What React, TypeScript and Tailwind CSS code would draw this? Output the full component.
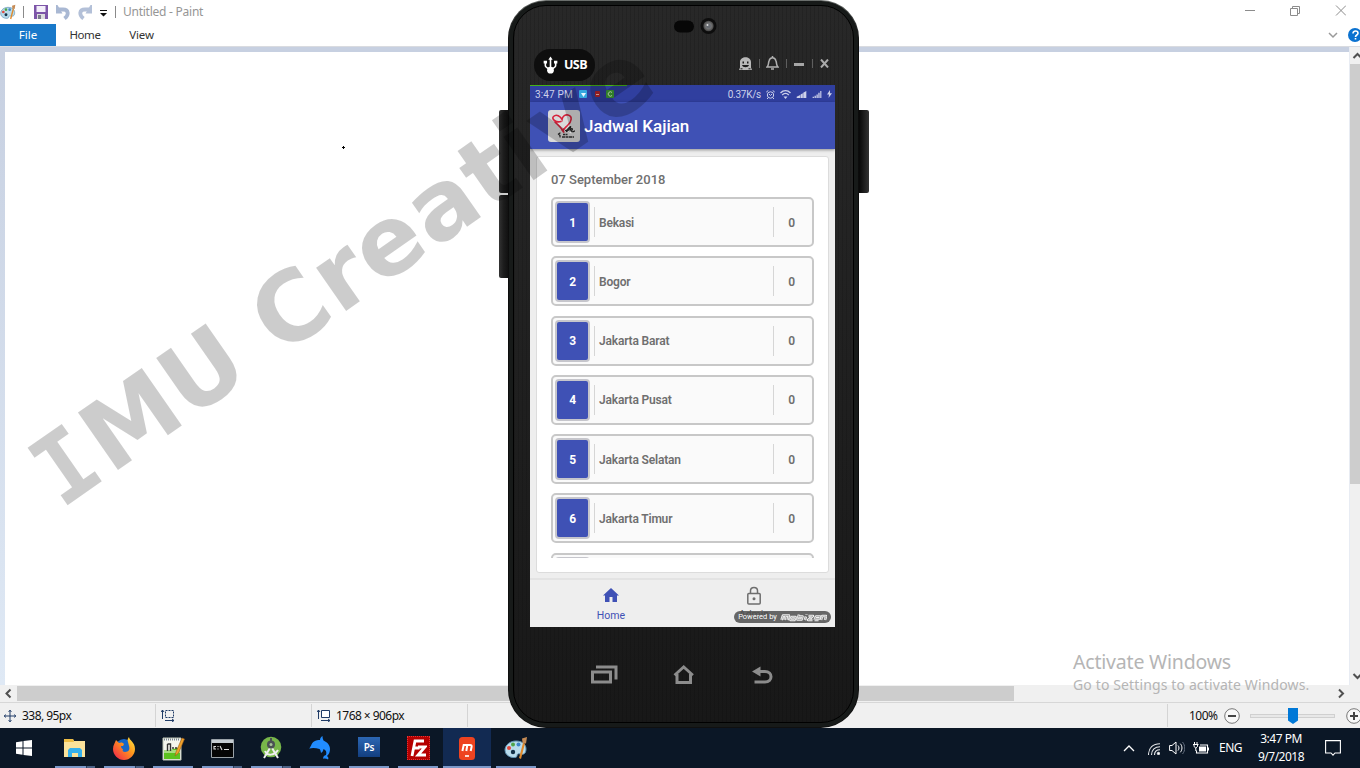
import React from "react";

const cities = ["Bekasi", "Bogor", "Jakarta Barat", "Jakarta Pusat", "Jakarta Selatan", "Jakarta Timur"];

function Palette({ className }: { className: string }) {
  return (
    <svg className={className} viewBox="0 0 24 24">
      <path d="M1 14c0-5 5-9 11-9s10 3 10 8-3 6-6 5c-2-.6-3 0-3 2 0 3-12 2-12-6z" fill="#b9dcec" stroke="#5f93b3" strokeWidth="1" />
      <circle cx="5" cy="12" r="2" fill="#e2483b" />
      <circle cx="9" cy="8.500" r="2" fill="#4fa64a" />
      <circle cx="14.500" cy="8.500" r="2" fill="#3f86c8" />
      <circle cx="9" cy="16" r="2.200" fill="#123047" />
      <path d="M15 22L19 7l2 .6L17 23z" fill="#e08a2c" />
      <path d="M18.600 7L18 2.500 23 1l-1 6.500z" fill="#c58b55" />
    </svg>
  );
}

function TitleBar() {
  return (
    <div className="flex h-6 shrink-0 items-center bg-white">
      <Palette className="h-[18px] w-4 shrink-0" />
      <div className="ml-[7px] h-3 w-px bg-[#8a8a8a]" />
      <svg className="ml-[10px] h-[14px] w-[14px]" viewBox="0 0 14 14">
        <path d="M0 0h14v14H0z" fill="#7d55a8" />
        <path d="M2.500 1h9v6h-9z" fill="#f3eefa" />
        <path d="M3 9h8v5H3z" fill="#ddd" />
        <path d="M4 10h3v4H4z" fill="#7a7a8c" />
      </svg>
      <svg className="ml-2 h-[15px] w-[14px]" viewBox="0 0 14 15">
        <path d="M3 4.500h4c6 0 6 5.500 1.500 9" fill="none" stroke="#a9b8d3" strokeWidth="3.800" />
        <path d="M0 0l1.500 0 5 8.500H0z" fill="#a9b8d3" />
      </svg>
      <svg className="ml-2 h-[15px] w-[14px]" viewBox="0 0 14 15">
        <path d="M11 4.500H7C1 4.500 1 10 5.500 13.500" fill="none" stroke="#b3c0d8" strokeWidth="3.800" />
        <path d="M14 0l-1.500 0-5 8.500H14z" fill="#b3c0d8" />
      </svg>
      <svg className="ml-2 mt-[2px] h-2 w-[7px]" viewBox="0 0 7 8">
        <path d="M0 1h7v1H0zM0 4h7L3.500 7.500z" fill="#111" />
      </svg>
      <div className="ml-[8px] h-3 w-px bg-[#8a8a8a]" />
      <div className="ml-[7px] text-[12px] leading-6 tracking-[-0.25px] text-[#969696]">Untitled - Paint</div>
      <svg className="mb-[3px] ml-auto mr-[14px] h-[11px] w-[102px]" viewBox="0 0 102 11" fill="none" stroke="#8c8c8c">
        <path d="M1 5.500h10" />
        <path d="M46.500 3.500h7v7h-7zM48.500 3.500v-2h7v7h-2" />
        <path d="M92 .5l10 10M102 .5l-10 10" />
      </svg>
    </div>
  );
}

function RibbonTabs() {
  return (
    <div className="flex h-[22px] shrink-0 items-center bg-white text-[11.500px] text-[#333]">
      <div className="flex h-[22px] w-14 items-center justify-center bg-[#1979ca] text-white">File</div>
      <div className="w-[58px] text-center tracking-[-0.4px]">Home</div>
      <div className="w-[55px] text-center tracking-[-0.15px]">View</div>
      <svg className="ml-auto h-[14px] w-[32px]" viewBox="0 0 32 14">
        <path d="M1 5l4 4 4-4" fill="none" stroke="#9a9a9a" strokeWidth="1.500" />
        <circle cx="27" cy="7" r="7" fill="#0b72d0" />
        <path d="M25 5.500c0-3.500 5-3 5-.3 0 1.900-2.500 1.700-2.500 3.700M27.500 10v1.500" fill="none" stroke="#fff" strokeWidth="1.600" />
      </svg>
    </div>
  );
}

function Canvas() {
  return (
    <div className="flex h-[639px] shrink-0 border-t border-[#d9dbe0]">
      <div className="flex w-[1349px] flex-col">
        <div className="h-[5px] bg-[#c7d0e1]" />
        <div className="flex h-[633px]">
          <div className="w-[5px] bg-gradient-to-b from-[#c7d0e1] to-[#dfe9f5]" />
          <div className="flex-1 bg-white pl-[337px] pt-[94px]">
            <svg className="h-[3px] w-[3px]" viewBox="0 0 3 3">
              <path d="M1 0h1v1h1v1H2v1H1V2H0V1h1z" fill="#000" />
            </svg>
          </div>
        </div>
      </div>
      <div className="w-px bg-[#e8ecf3]" />
      <div className="flex w-[10px] flex-col justify-between overflow-hidden bg-[#f0f0f0]">
        <div>
          <svg className="h-[17px] w-[14px]" viewBox="0 0 14 17">
            <path d="M3.500 11L7.500 7l4 4" fill="none" stroke="#505050" strokeWidth="2" />
          </svg>
          <div className="h-[420px] bg-[#cdcdcd]" />
        </div>
        <svg className="h-[17px] w-[14px]" viewBox="0 0 14 17">
          <path d="M3.500 6L7.500 10l4-4" fill="none" stroke="#505050" strokeWidth="2" />
        </svg>
      </div>
    </div>
  );
}

function HScroll() {
  return (
    <div className="flex h-[17px] shrink-0 items-start bg-[#f0f0f0] pt-px">
      <svg className="h-[15px] w-[17px]" viewBox="0 0 17 15">
        <path d="M10.500 3.500L6.500 7.500l4 4" fill="none" stroke="#505050" strokeWidth="2" />
      </svg>
      <div className="h-[15px] w-[997px] bg-[#cdcdcd]" />
      <svg className="ml-auto mr-[11px] h-[15px] w-4" viewBox="0 0 16 15">
        <path d="M6 3.500L10 7.500l-4 4" fill="none" stroke="#505050" strokeWidth="2" />
      </svg>
    </div>
  );
}

function StatusBar() {
  return (
    <div className="flex h-[26px] shrink-0 items-center border-t border-[#d7d7d7] bg-[#f0f0f0] text-[12px] tracking-[-0.55px] text-[#111]">
      <svg className="ml-1 h-3 w-3" viewBox="0 0 12 12" fill="none" stroke="#1f3b66">
        <path d="M0 6h12M6 0v12M4.500 1.500L6 .5l1.500 1M4.500 10.500L6 11.500l1.500-1M1.500 4.500L.5 6l1 1.500M10.500 4.500L11.500 6l-1 1.500" />
      </svg>
      <div className="ml-[6px] w-[133px]">338, 95px</div>
      <div className="h-[23px] w-px bg-[#d4d4d4]" />
      <svg className="ml-[5px] h-[13px] w-[14px]" viewBox="0 0 14 13" fill="none" stroke="#1f3b66">
        <path d="M1.500 10V1M0 3l1.500-2L3 3M4 11.500h9M11 10l2 1.500-2 1.500" />
        <path d="M4.500 1.500h8v7h-8z" strokeDasharray="2 1" />
      </svg>
      <div className="ml-[136px] h-[23px] w-px bg-[#d4d4d4]" />
      <svg className="ml-[5px] h-[13px] w-[14px]" viewBox="0 0 14 13" fill="none" stroke="#1f3b66">
        <path d="M1.500 10V1M0 3l1.500-2L3 3M4 11.500h9M11 10l2 1.500-2 1.500" />
        <path d="M4.500 1.500h8v7h-8z" fill="#fff" />
      </svg>
      <div className="ml-[5px] w-[131px]">1768 × 906px</div>
      <div className="h-[23px] w-px bg-[#d4d4d4]" />
      <div className="ml-auto h-[23px] w-px bg-[#d4d4d4]" />
      <div className="ml-[21px] w-[35px]">100%</div>
      <svg className="h-4 w-4 shrink-0" viewBox="0 0 16 16">
        <circle cx="8" cy="8" r="7.300" fill="#f8f8f8" stroke="#777" />
        <path d="M4 8h8" stroke="#444" strokeWidth="2" />
      </svg>
      <div className="ml-[10px] flex h-4 w-[85px] shrink-0 items-center justify-center">
        <div className="flex h-1 w-full items-center justify-center border border-[#d0d0d0] bg-[#e8e8e8]">
          <svg className="h-4 w-[10px] shrink-0" viewBox="0 0 10 16">
            <path d="M0 0h10v12.500L5 16l-5-3.500z" fill="#0078d7" />
          </svg>
        </div>
      </div>
      <div className="ml-[11px] w-[14px] overflow-hidden">
        <svg className="h-4 w-4" viewBox="0 0 16 16">
          <circle cx="8" cy="8" r="7.300" fill="#f8f8f8" stroke="#777" />
          <path d="M4 8h8M8 4v8" stroke="#444" strokeWidth="2" />
        </svg>
      </div>
    </div>
  );
}

const taskIcons: { icon: React.ReactNode; active?: boolean; multi?: boolean }[] = [
  {
    multi: true,
    icon: (
      <svg className="h-[18px] w-[22px]" viewBox="0 0 22 18">
        <path d="M0 0h9l1 2h11v16H0z" fill="#fbe29a" />
        <path d="M0 0h9l1 3H0z" fill="#eebd45" />
        <path d="M4 18v-7l2-2h10l2 2v7h-4v-4H8v4z" fill="#35b0ec" />
      </svg>
    ),
  },
  {
    multi: true,
    icon: (
      <svg className="h-[23px] w-[23px]" viewBox="0 0 23 23">
        <defs>
          <linearGradient id="fox" x1="1" y1="0" x2="0" y2="1">
            <stop offset="0" stopColor="#fff04a" />
            <stop offset=".4" stopColor="#ff9a1c" />
            <stop offset="1" stopColor="#f0184f" />
          </linearGradient>
        </defs>
        <circle cx="11" cy="11" r="9" fill="#1867c7" />
        <path d="M3 3l3 3c2-1 4-.5 5 1l-1 2H8c0 2 1 3 2 3-1 2 0 3 2 3 4 0 5-3 4-6l-1-4c-1-2 0-4 1-5 0 3 6 5 6 12 0 6-5 11-11 11S0 18 0 12C0 8 2 6 3 3z" fill="url(#fox)" />
      </svg>
    ),
  },
  {
    icon: (
      <svg className="h-[25px] w-[23px]" viewBox="0 0 23 25">
        <path d="M1 2h18v22H1z" fill="#f4f6ee" stroke="#bcc3b4" />
        <path d="M2 16l16-5v12H2z" fill="#5cc21f" />
        <path d="M2 14h16v3H2z" fill="#a8dd80" />
        <path d="M2 3.500h16" stroke="#7b8794" strokeWidth="2" strokeDasharray="1 1" />
        <path d="M5.500 8h3v7M5.500 8v7M10 12h2M13 12h2" stroke="#333" strokeWidth="1.400" fill="none" />
        <path d="M13 20l1-4 6-14 2.500 1-6 14z" fill="#f1a22b" stroke="#9b5b18" strokeWidth=".6" />
      </svg>
    ),
  },
  {
    multi: true,
    icon: (
      <svg className="h-[19px] w-[23px]" viewBox="0 0 23 19">
        <path d="M.5.5h22v18H.5z" fill="#050505" stroke="#9aa2a8" />
        <path d="M1 1h21v3H1z" fill="#c5ccd1" />
        <path d="M3 7.500h2M3 7v3h2M7 7v1M7 9.500v1M9 7l2 4M13 10.500h5" stroke="#ddd" strokeWidth="1.100" fill="none" />
      </svg>
    ),
  },
  {
    multi: true,
    icon: (
      <svg className="h-[24px] w-[22px]" viewBox="0 0 22 24">
        <circle cx="11" cy="11" r="10.300" fill="#78b74a" />
        <path d="M10 12L4 22M12 12l6 10M5 15c2 5 9 5 13-1" fill="none" stroke="#f0f0f0" strokeWidth="2" />
        <circle cx="11" cy="8.500" r="4" fill="#4b5154" />
        <path d="M11 2v4" stroke="#4b5154" strokeWidth="2" />
        <circle cx="11" cy="8.500" r="1.500" fill="#a9c49a" />
      </svg>
    ),
  },
  {
    icon: (
      <svg className="h-6 w-[22px]" viewBox="0 0 22 24">
        <path d="M0 12.500c2-1 2-5 5-7C7 4 9 4 11 4c0-2 1-3 2.500-4 0 1.500.2 3 1 4.500C18 6 21 9 21 13c0 3-1 5-3 7 1 1 2 2 1 3.500-1.500-1-3-1.300-5-.8 0-2 1-3 3-3.700C18 16 17 14 14.500 13c-.3 2-1 3-2.500 4-.3-1.500-.5-3-1.500-4C7 12 4 11.500 0 12.500z" fill="#218cff" />
      </svg>
    ),
  },
  {
    icon: (
      <div className="-mt-[2px] flex h-[20px] w-[22px] items-center justify-center bg-gradient-to-b from-[#2c67b4] to-[#133f80] text-[10px] font-semibold tracking-tight text-white">
        Ps
      </div>
    ),
  },
  {
    icon: (
      <div className="flex h-6 w-[23px] items-center justify-center border border-dotted border-[#e03636] bg-[#b50000]">
        <svg className="h-[18px] w-[18px]" viewBox="0 0 18 18" fill="none" stroke="#fff" strokeWidth="2.800">
          <path d="M3 17L6 2h9M4.500 9h6M9 8h7l-7 8h8" />
        </svg>
      </div>
    ),
  },
  {
    active: true,
    icon: (
      <svg className="h-[23px] w-4" viewBox="0 0 16 23">
        <rect width="16" height="23" rx="3.500" fill="#ee4320" />
        <path d="M3.400 14L4.700 8H11q2 0 1.600 1.800L11.700 14M8.300 8L7.300 14" fill="none" stroke="#fff" strokeWidth="2" />
        <path d="M6 19h4" stroke="#fff" strokeWidth="1.600" />
      </svg>
    ),
  },
  { icon: <Palette className="h-6 w-6" /> },
];

function Taskbar() {
  return (
    <div className="flex h-10 shrink-0 bg-[#0b1726] text-white">
      <div className="flex w-[51px] items-center pl-4">
        <svg className="h-4 w-4" viewBox="0 0 16 16">
          <path d="M0 2.200l6.500-1v6.300H0zM7.500 1L16 0v7.500H7.500zM0 8.500h6.500v6.300l-6.500-1zM7.500 8.500H16V16l-8.500-1z" fill="#fff" />
        </svg>
      </div>
      <div className="flex gap-px">
        {taskIcons.map((t, i) => (
          <div key={i} className={t.active ? "flex w-12 flex-col items-center bg-[#122a52]" : "flex w-12 flex-col items-center"}>
            <div className="flex h-[38px] items-center justify-center pt-[2px]">{t.icon}</div>
            <div className={t.active ? "flex h-[2px] w-12 bg-[#7b98c9]" : "flex h-[2px] w-10 bg-[#7b98c9]"}>
              {t.multi && <div className="ml-auto h-[2px] w-[9px] border-l border-[#2c3d58] bg-[#4c6286]" />}
            </div>
          </div>
        ))}
      </div>
      <div className="ml-auto flex items-center">
        <svg className="h-2 w-3" viewBox="0 0 12 8">
          <path d="M1 7l5-5 5 5" fill="none" stroke="#fff" strokeWidth="1.300" />
        </svg>
        <svg className="ml-[13px] mt-[2px] h-3 w-3" viewBox="0 0 12 12" fill="none" stroke="#e6e8ea">
          <path d="M.5 12C.5 5 5 .7 12 .7M3.500 12c0-5 3.500-8.300 8.500-8.300M6.500 12c0-3.500 2-5.300 5.500-5.300" strokeWidth="1.100" />
          <circle cx="10.500" cy="10.500" r="1.200" fill="#fff" />
        </svg>
        <svg className="ml-[9px] h-[14px] w-4" viewBox="0 0 16 14" fill="none" stroke="#fff">
          <path d="M.6 4.500h2.400L7 1v12L3 9.500H.6zM9 4.500c1.300 1.500 1.300 3.500 0 5M11.300 2.700c2.200 2.500 2.200 6 0 8.600" />
          <path d="M13.500 1c3 3.500 3 8.500 0 12" stroke="#657080" />
        </svg>
        <svg className="ml-[8px] h-[12px] w-4" viewBox="0 0 16 12" fill="none" stroke="#fff">
          <path d="M3.500 8.500v2.500h11v-8H7" strokeWidth="1.100" />
          <path d="M6 4.500h7v5H6zM15 5.500h1v3h-1z" fill="#fff" stroke="none" />
          <path d="M1.500 0v2.500M4 0v2.500M0 2.500h5.500M1 3v1.500l1.800 1.500L4.500 4.500V3M2.800 6v3" />
        </svg>
        <div className="ml-[10px] w-[25px] text-[12px] tracking-[-0.5px]">ENG</div>
        <div className="ml-[6px] w-[62px] text-center text-[12px] leading-[18px] tracking-[-0.5px]">
          3:47 PM
          <br />
          9/7/2018
        </div>
        <svg className="ml-[13px] mr-[19px] h-4 w-4" viewBox="0 0 16 16" fill="none" stroke="#fff">
          <path d="M.6.6h14.800v12.400H10L8 15.200 6 13H.6z" strokeWidth="1.100" />
        </svg>
      </div>
    </div>
  );
}

function PhoneHeader() {
  return (
    <>
      <div className="flex h-[45px] items-start justify-center pt-[16px]">
        <svg className="ml-[22px] h-[18px] w-[44px]" viewBox="0 0 44 18">
          <defs>
            <radialGradient id="lens">
              <stop offset="0" stopColor="#aaa" />
              <stop offset="1" stopColor="#444" />
            </radialGradient>
          </defs>
          <rect x="1" y="4.500" width="20" height="12" rx="6" fill="#070707" />
          <circle cx="35.500" cy="10" r="8" fill="#0d0d0d" />
          <circle cx="35.500" cy="10" r="5.200" fill="url(#lens)" />
          <circle cx="35.500" cy="10" r="2.500" fill="#666a70" />
          <circle cx="34.500" cy="9" r="1" fill="#ddd" />
        </svg>
      </div>
      <div className="flex h-[40px] items-start pl-[20px] pr-[24px] pt-[4px]">
        <div className="flex h-8 w-[61px] items-center rounded-full bg-[#0e0e0e] pl-[9px] font-['Open_Sans',sans-serif] text-[12.500px] font-bold text-white">
          <svg className="h-[18px] w-[15px]" viewBox="0 0 16 19" fill="none" stroke="#fff" strokeWidth="1.700">
            <path d="M8 15V3M2.500 7v3q0 2 5 4M13.500 7v3q0 2-5 4" />
            <path d="M5.700 4L8 .5 10.300 4z" fill="#fff" stroke="none" />
            <circle cx="8" cy="15" r="3.600" fill="#fff" stroke="none" />
            <path d="M.7 5h3.600v3H.7zM11.700 5h3.600v3h-3.600z" fill="#fff" stroke="none" />
          </svg>
          <div className="ml-[6px] tracking-[-0.6px]">USB</div>
        </div>
        <div className="ml-auto flex h-[28px] items-center">
          <svg className="h-[13px] w-[13px]" viewBox="0 0 13 13">
            <path d="M0 13L1 10.500V5c0-6.500 11-6.500 11 0v5.500L13 13z" fill="#b9b9b9" />
            <path d="M3.500 4.500h1.500v2H3.500zM8 4.500h1.500v2H8zM3 8h7c-.7 3-6.300 3-7 0z" fill="#1c1c1c" />
            <path d="M1.500 11.800h2M9.500 11.800h2" stroke="#1c1c1c" />
          </svg>
          <div className="ml-[7px] h-[9px] w-px bg-[#5e5e5e]" />
          <svg className="ml-[6px] h-[14px] w-[13px]" viewBox="0 0 13 14" fill="none" stroke="#b0b0b0" strokeWidth="1.500">
            <path d="M1 11c2-2 1-3 2-6 1-4.500 6-4.500 7 0 1 3 0 4 2 6zM5 13h3M6.500 0v2" />
          </svg>
          <div className="ml-[7px] h-[9px] w-px bg-[#5e5e5e]" />
          <div className="ml-[7px] mt-[3px] h-[3px] w-[10px] bg-[#a6a6a6]" />
          <div className="ml-[8px] h-[9px] w-px bg-[#5e5e5e]" />
          <svg className="ml-[7px] h-[9px] w-[9px]" viewBox="0 0 9 9">
            <path d="M1 .5l7 8M8 .5l-7 8" stroke="#aaa" strokeWidth="2" />
          </svg>
        </div>
      </div>
    </>
  );
}

function AppStatus() {
  return (
    <div className="flex h-[17px] shrink-0 flex-col bg-[#303f9f]">
      <div className="h-px w-[97px] shrink-0 bg-[#45b317]" />
      <div className="flex h-4 items-center pl-[5px] pr-[3px] text-[10px] tracking-[0.15px] text-[#cdd1ea]">
        <div className="w-[44px]">3:47 PM</div>
        <div className="flex h-[8px] w-[8px] items-center justify-center rounded-[1px] bg-[#35a7de]">
          <svg className="h-[5px] w-[5px]" viewBox="0 0 5 5"><path d="M0 1h5L2.500 5z" fill="#e8f6ff" /></svg>
        </div>
        <div className="ml-[8px] flex h-[6px] w-[5px] items-center justify-center rounded-[1px] bg-[#b6252b]">
          <div className="h-px w-[3px] bg-[#f2c1b4]" />
        </div>
        <div className="ml-[6px] flex h-[8px] w-[8px] items-center justify-center rounded-[1px] bg-[#3c9e35]">
          <svg className="h-[6px] w-[6px]" viewBox="0 0 6 6"><path d="M5 1.500A2.200 2.200 0 105 4.500" fill="none" stroke="#d7f0c4" /></svg>
        </div>
        <div className="ml-auto tracking-[-0.25px]">0.37K/s</div>
        <svg className="ml-[5px] h-[9px] w-[9px]" viewBox="0 0 9 9" fill="none" stroke="#cdd1ea">
          <circle cx="4.500" cy="5" r="3.200" />
          <path d="M.3 2L2.300.5M8.700 2L6.700.5M3 4l1.500 1.500L6 4M2 8l-1 1M7 8l1 1" />
        </svg>
        <svg className="ml-[5px] h-[9px] w-[11px]" viewBox="0 0 11 9" fill="none" stroke="#cdd1ea" strokeWidth="1.400">
          <path d="M.5 3c3-3 7-3 10 0M2.200 5c2-2 4.600-2 6.600 0" />
          <path d="M3.500 6.500h4l-2 2.500z" fill="#cdd1ea" stroke="none" />
        </svg>
        <svg className="ml-[5px] h-[7px] w-[11px]" viewBox="0 0 11 8"><path d="M0 8V6.500L4 4.500v3.500zM4.500 8V4l2.500-1.500V8zM7.500 8V2L11 0v8z" fill="#cdd1ea" /></svg>
        <svg className="ml-[5px] h-[7px] w-[10px]" viewBox="0 0 10 8"><path d="M0 6.500h1.500V8H0zM2.200 5.500h1.500V8H2.200zM4.400 4h1.500v4H4.400zM6.500 2H8v6H6.500zM8.700 0H10v8H8.700z" fill="#cdd1ea" /></svg>
        <svg className="ml-[5px] h-[8px] w-[5px]" viewBox="0 0 5 8"><path d="M3 0L0 4.500h2L1.500 8 5 3.300H3z" fill="#cdd1ea" /></svg>
      </div>
    </div>
  );
}

function CityRow({ n, name }: { n: number; name: string }) {
  return (
    <div className="flex h-[50px] shrink-0 items-center rounded-[5px] border-2 border-[#c8c8c8] bg-[#fafafa] pl-[2px]">
      <div className="flex h-[42px] w-[35px] items-center justify-center rounded-[4px] border-2 border-[#c6c6cc] bg-[#3f51b5] pt-px font-bold text-white">{n}</div>
      <div className="ml-[4px] h-[30px] w-px bg-[#d6d6d6]" />
      <div className="ml-[4px] flex-1 pt-px">{name}</div>
      <div className="h-[30px] w-px bg-[#d6d6d6]" />
      <div className="w-[38px] pr-[3px] pt-px text-center">0</div>
    </div>
  );
}

function AppScreen() {
  return (
    <div className="flex h-[542px] w-[305px] flex-col overflow-hidden bg-[#eeeeee]">
      <AppStatus />
      <div className="z-10 flex h-[47px] shrink-0 items-center bg-[#3f51b5] pl-[18px] shadow-[0_1px_3px_rgba(0,0,0,0.4)]">
        <svg className="h-8 w-8 rounded-[3px] bg-[#dadada]" viewBox="0 0 32 32" fill="none" strokeLinecap="round">
          <path d="M13 11.500C8 13 3 9 5.500 6.500c3-3 7 0 8.500 3 .5-3 3-5 6-4.500 5 1 3.500 7-.5 10.500-2 2-4 3.500-4.500 5.500-2-4-5-6-8-9" stroke="#d5233c" strokeWidth="1.600" />
          <path d="M14 20l2 2M15 19c0 1 0 2 .5 3" stroke="#d5233c" strokeWidth="1.300" />
          <path d="M17.500 20.500c2 0 4-4.500 5-4s-2 4-4 5M22 21c.5-3 3.500-3 2-.8-1.500 1.800 1 2 2.500.8M12 23l-1.500 1L12 25.500v1.500" stroke="#222" strokeWidth="1.200" />
          <path d="M15 24.500h5" stroke="#333" strokeWidth="1.300" strokeDasharray="2 .5" strokeLinecap="butt" />
          <path d="M14 27h12" stroke="#333" strokeWidth="1.500" strokeDasharray="3 .5" strokeLinecap="butt" />
        </svg>
        <div className="ml-[4px] pt-[2px] text-[17px] font-medium tracking-[-0.03px] text-white">Jadwal Kajian</div>
      </div>
      <div className="mx-[6px] mt-[7px] flex h-[417px] shrink-0 flex-col rounded-[3px] border border-[#dcdcdc] bg-white pl-[14px] pr-[14px] pt-[14px]">
        <div className="h-[26px] text-[13px] font-medium leading-[18px] text-[#707070]">07 September 2018</div>
        <div className="flex h-[361px] flex-col gap-[9.300px] overflow-hidden text-[12px] font-semibold tracking-[-0.18px] text-[#6f6f6f]">
          {cities.map((c, i) => (
            <CityRow key={c} n={i + 1} name={c} />
          ))}
          <div className="h-[50px] shrink-0 rounded-[5px] border-2 border-[#c8c8c8] bg-[#fafafa] pl-[2px] pt-[2px]">
            <div className="h-[42px] w-[35px] rounded-[4px] border-2 border-[#c6c6cc] bg-[#3f51b5]" />
          </div>
        </div>
      </div>
      <div className="mt-[5px] flex h-[49px] shrink-0 border-t-2 border-[#e3e3e3] pl-[9px] text-[10.500px]">
        <div className="flex w-[144px] flex-col items-center pt-[8px] text-[#3f51b5]">
          <svg className="h-[14px] w-4" viewBox="0 0 16 14"><path d="M8 0l8 7.500h-2V14H9.500V9h-3v5H2V7.500H0z" fill="#3f51b5" /></svg>
          <div className="mt-[6px] leading-[16px]">Home</div>
        </div>
        <div className="relative flex w-[142px] flex-col items-center pt-[6px] text-[#555]">
          <svg className="h-[19px] w-4" viewBox="0 0 16 19" fill="none" stroke="#6e6e6e" strokeWidth="1.500">
            <rect x="1.800" y="7.500" width="12.400" height="10.500" rx="1" />
            <path d="M4.500 7.500V4.800c0-4.500 7-4.500 7 0v2.700" />
            <circle cx="8" cy="12.700" r="1.500" fill="#6e6e6e" stroke="none" />
          </svg>
          <div className="mt-[2px] leading-[16px]">Admin</div>
          <div className="absolute left-[51px] top-[31px] flex h-3 w-[97px] items-center justify-center rounded-full bg-[#4d4d4d]/85 text-[7.500px] leading-3 text-white">
            <span className="tracking-[-0.02px]">Powered by</span>
            <svg className="ml-[3px] h-[9px] w-[47px]" viewBox="0 0 47 9" fill="none" strokeLinejoin="round">
              <path d="M1.500 7L3 2.500h6L7.500 7M5.500 3L4.500 7M10.500 6.500l1-2.500h4L14.500 7h-4zM19 1.500l-1.500 5H21.500l1-3H18.500M26 3.500L24.800 7M26.500 1v.5M28.500 3H33l-5 4h4.500M34.500 7h4M34.500 7L36 3.500h4l-.5 2h-4M41 7l1.200-4h4L45 7" stroke="#f2f2f2" strokeWidth="2.500" />
              <path d="M1.500 7L3 2.500h6L7.500 7M5.500 3L4.500 7M10.500 6.500l1-2.500h4L14.500 7h-4zM19 1.500l-1.500 5H21.500l1-3H18.500M26 3.500L24.800 7M28.500 3H33l-5 4h4.500M34.500 7h4M34.500 7L36 3.500h4l-.5 2h-4M41 7l1.200-4h4L45 7" stroke="#666" strokeWidth=".45" />
            </svg>
          </div>
        </div>
      </div>
    </div>
  );
}

function Phone() {
  return (
    <div className="absolute left-[499px] top-0 isolate flex h-[728px] w-[370px] font-['Roboto',sans-serif]">
      <div className="flex w-[9px] flex-col gap-[2px] pt-[110px]">
        <div className="h-[83px] rounded-l-[2px] bg-gradient-to-r from-[#333] via-[#1d1d1d] to-[#111]" />
        <div className="h-[83px] rounded-l-[2px] bg-gradient-to-r from-[#333] via-[#1d1d1d] to-[#111]" />
      </div>
      <div className="h-[728px] w-[351px] rounded-[38px] bg-gradient-to-b from-[#6b6f6d] via-[#0b0b0b] via-[6%] to-[#101010] p-px">
        <div className="h-[726px] rounded-[37px] bg-[#171a19] p-[4px]">
          <div className="flex h-[718px] flex-col rounded-[33px] border border-black bg-[repeating-linear-gradient(90deg,rgba(0,0,0,0.12)_0px,rgba(0,0,0,0.12)_1px,transparent_1px,transparent_4px),linear-gradient(180deg,#282828,#181818)]">
            <div className="-mt-[6px]">
              <PhoneHeader />
            </div>
            <div className="pl-[16px]">
              <AppScreen />
            </div>
            <svg className="ml-[76px] mt-[37px] h-[22px] w-[184px]" viewBox="0 0 184 22" fill="none" stroke="#8c8c8c" strokeWidth="3">
              <path d="M2.500 8h18v10h-18z" />
              <path d="M6 3h20v12.500" strokeWidth="3" />
              <path d="M87 10v8.500h13.500V10" />
              <path d="M84.500 11.200L93.700 3l9.200 8.200" strokeWidth="2.800" />
              <path d="M166 7.500h9c8 0 8 10.500 0 10.500h-10.500" />
              <path d="M162 7.500l8.500-5v10z" fill="#8c8c8c" stroke="none" />
            </svg>
          </div>
        </div>
      </div>
      <div className="pt-[110px]">
        <div className="h-[83px] w-[10px] rounded-r-[2px] bg-gradient-to-r from-[#080808] via-[#1d1d1d] to-[#333]" />
      </div>
    </div>
  );
}

export default function App() {
  return (
    <div className="relative flex h-[768px] w-[1360px] flex-col overflow-hidden bg-white font-['Noto_Sans',sans-serif]">
      <TitleBar />
      <RibbonTabs />
      <Canvas />
      <HScroll />
      <StatusBar />
      <Taskbar />
      <div className="absolute left-[1073px] top-[649px] whitespace-nowrap text-[#b5b5b5]">
        <div className="text-[19.500px] leading-[26px] tracking-[-0.2px]">Activate Windows</div>
        <div className="text-[14px] leading-[20px] tracking-[0.13px]">Go to Settings to activate Windows.</div>
      </div>
      <Phone />
      <div className="pointer-events-none absolute left-[65px] top-[426px] origin-[0_81px] -rotate-[34.9deg] whitespace-nowrap font-['DejaVu_Sans',sans-serif] text-[96px] font-bold leading-none text-black/20">
        <span className="-ml-[5px] font-['DejaVu_Sans_Mono',monospace] tracking-[3px]">I</span>MU <span className="tracking-[1.4px]">Creative</span>
      </div>
    </div>
  );
}
